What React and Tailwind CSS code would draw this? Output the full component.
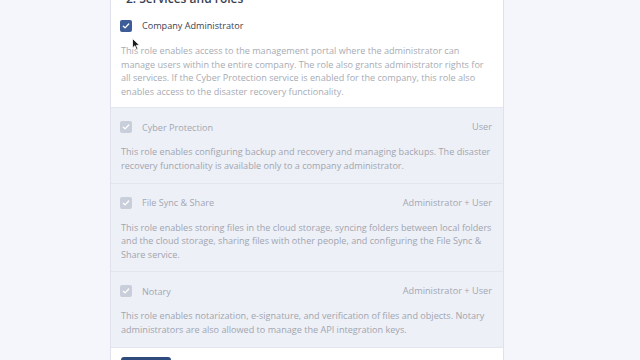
import React from 'react';

const roles = [
  {
    name: 'Cyber Protection',
    scope: 'User',
    text: 'This role enables configuring backup and recovery and managing backups. The disaster recovery functionality is available only to a company administrator.',
  },
  {
    name: 'File Sync & Share',
    scope: 'Administrator + User',
    text: 'This role enables storing files in the cloud storage, syncing folders between local folders and the cloud storage, sharing files with other people, and configuring the File Sync & Share service.',
  },
  {
    name: 'Notary',
    scope: 'Administrator + User',
    text: 'This role enables notarization, e-signature, and verification of files and objects. Notary administrators are also allowed to manage the API integration keys.',
  },
];

const Check = ({ disabled }) => (
  <span
    className={`flex h-[12px] w-[12px] items-center justify-center rounded-[2px] ${
      disabled ? 'bg-[#c9cedb]' : 'bg-[#3e5c98]'
    }`}
  >
    <svg width="8" height="8" viewBox="0 0 8 8" fill="none">
      <path d="M1.3 4.2 L3.1 5.9 L6.7 2" stroke="white" strokeWidth="1.3" strokeLinecap="round" strokeLinejoin="round" />
    </svg>
  </span>
);

const App = () => {
  return (
    <div className="relative h-[360px] w-[640px] overflow-hidden bg-[#f4f6fb] font-['Open_Sans',sans-serif]">
      <div className="ml-[110px] mt-[-7px] w-[394px] border-x border-[#dfe2ea] bg-white">
        <div className="pl-[15px] text-[12px] font-semibold leading-[12px] text-[#3a4150]">2. Services and roles</div>

        <div className="pl-[9px] pr-[10px] pt-[14px] pb-[9px]">
          <div className="flex h-[14px] items-center gap-[10px]">
            <Check />
            <span className="text-[9.1px] text-[#3b4150]">Company Administrator</span>
          </div>
          <p className="mt-[11px] w-[372px] pl-[1px] text-[9.1px] leading-[13.6px] text-[#a7abb4]">
            This role enables access to the management portal where the administrator can manage users within the entire company. The role also grants administrator rights for all services. If the Cyber Protection service is enabled for the company, this role also enables access to the disaster recovery functionality.
          </p>
        </div>

        {roles.map((r) => (
          <div key={r.name} className="border-t border-[#e3e6ee] bg-[#eef0f7] pl-[9px] pr-[10px] pt-[12px] pb-[10px]">
            <div className="flex h-[14px] items-center justify-between pr-[1px]">
              <div className="flex items-center gap-[10px]">
                <Check disabled />
                <span className="text-[9.1px] text-[#a2a7b2]">{r.name}</span>
              </div>
              <span className="text-[9.2px] text-[#a2a7b2]">{r.scope}</span>
            </div>
            <p className="mt-[11px] w-[372px] pl-[1px] text-[9.1px] leading-[13.6px] text-[#a0a5af]">{r.text}</p>
          </div>
        ))}

        <div className="border-t border-[#e3e6ee] px-[10px] pt-[9px] pb-[10px]">
          <div className="h-[20px] w-[50px] rounded-[3px] bg-[#2f4a7c]" />
        </div>
      </div>

      <svg className="absolute left-[132px] top-[38px]" width="9" height="13" viewBox="0 0 9 13">
        <path d="M0.5 0.5 L0.5 10 L2.8 7.8 L4.6 11.8 L6 11.2 L4.3 7.3 L7.5 7.3 Z" fill="#1c1c1c" stroke="white" strokeWidth="0.8" />
      </svg>
    </div>
  );
};

export default App;
